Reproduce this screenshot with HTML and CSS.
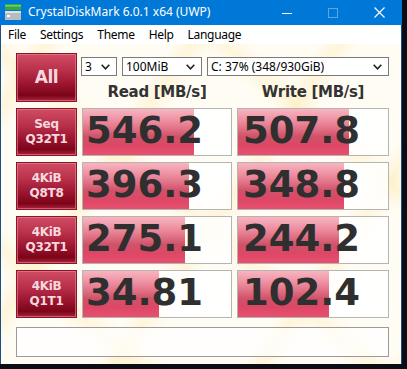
FILE: index.html
```html
<!DOCTYPE html>
<html lang="en">
<head>
  <meta charset="UTF-8" />
  <title>CrystalDiskMark 6.0.1 x64 (UWP)</title>
  <link rel="stylesheet" href="styles.css">
</head>
<body>
  <div class="window">
    <div class="titlebar">
      <svg class="app-icon" width="16" height="16" viewBox="0 0 16 16">
        <rect x="0" y="0" width="16" height="6" fill="#35a845"/>
        <rect x="0" y="1" width="16" height="1.5" fill="#6fd07a"/>
        <rect x="0" y="7" width="16" height="9" fill="#b9bcbf"/>
        <rect x="0" y="7" width="16" height="2" fill="#dfe1e3"/>
        <rect x="2" y="11" width="3" height="2" fill="#ffffff"/>
      </svg>
      <span class="title">CrystalDiskMark 6.0.1 x64 (UWP)</span>
      <div class="caption">
        <span class="cap">
          <svg width="10" height="10" viewBox="0 0 10 10"><line x1="0" y1="5.5" x2="10" y2="5.5" stroke="#fff" stroke-width="1"/></svg>
        </span>
        <span class="cap">
          <svg width="10" height="10" viewBox="0 0 10 10"><rect x="0.5" y="0.5" width="9" height="9" fill="none" stroke="#5aa7e6" stroke-width="1"/></svg>
        </span>
        <span class="cap">
          <svg width="11" height="11" viewBox="0 0 11 11"><path d="M0.5 0.5 L10.5 10.5 M10.5 0.5 L0.5 10.5" stroke="#fff" stroke-width="1.2"/></svg>
        </span>
      </div>
    </div>

    <ul class="menu">
      <li>File</li>
      <li>Settings</li>
      <li>Theme</li>
      <li>Help</li>
      <li>Language</li>
    </ul>

    <div class="content">
      <div class="board">
        <button class="test-btn all">All</button>
        <div class="head">
          <div class="selects">
            <div class="select s-count">3<svg class="chev" width="9" height="6" viewBox="0 0 9 6"><path d="M0.7 0.7 L4.5 4.8 L8.3 0.7" fill="none" stroke="#1e1e1e" stroke-width="1.5"/></svg></div>
            <div class="select s-size">100MiB<svg class="chev" width="9" height="6" viewBox="0 0 9 6"><path d="M0.7 0.7 L4.5 4.8 L8.3 0.7" fill="none" stroke="#1e1e1e" stroke-width="1.5"/></svg></div>
            <div class="select s-drive">C: 37% (348/930GiB)<svg class="chev" width="9" height="6" viewBox="0 0 9 6"><path d="M0.7 0.7 L4.5 4.8 L8.3 0.7" fill="none" stroke="#1e1e1e" stroke-width="1.5"/></svg></div>
          </div>
          <div class="labels">
            <span>Read [MB/s]</span>
            <span>Write [MB/s]</span>
          </div>
        </div>

        <button class="test-btn">Seq<br>Q32T1</button>
        <div class="cell"><div class="bar" style="width:111px"></div><span class="value">546.2</span></div>
        <div class="cell"><div class="bar" style="width:111px"></div><span class="value">507.8</span></div>

        <button class="test-btn">4KiB<br>Q8T8</button>
        <div class="cell"><div class="bar" style="width:106px"></div><span class="value">396.3</span></div>
        <div class="cell"><div class="bar" style="width:106px"></div><span class="value">348.8</span></div>

        <button class="test-btn">4KiB<br>Q32T1</button>
        <div class="cell"><div class="bar" style="width:102px"></div><span class="value">275.1</span></div>
        <div class="cell"><div class="bar" style="width:101px"></div><span class="value">244.2</span></div>

        <button class="test-btn">4KiB<br>Q1T1</button>
        <div class="cell"><div class="bar" style="width:76px"></div><span class="value">34.81</span></div>
        <div class="cell"><div class="bar" style="width:91px"></div><span class="value">102.4</span></div>
      </div>
      <div class="comment"></div>
    </div>
  </div>
</body>
</html>
```

FILE: styles.css
```css
* {
  box-sizing: border-box;
  margin: 0;
  padding: 0;
}
body {
  background: #0c0d14;
  width: 407px;
  height: 369px;
  overflow: hidden;
}
.window {
  width: 402px;
  height: 364px;
  border-left: 1px solid #1b4f86;
  border-right: 1px solid #1b4f86;
  display: flex;
  flex-direction: column;
  background:
    repeating-linear-gradient(125deg, rgba(253, 226, 150, 0) 0px, rgba(253, 226, 150, 0) 45px, rgba(253, 226, 150, 0.28) 62px, rgba(253, 226, 150, 0) 80px, rgba(253, 226, 150, 0) 120px),
    repeating-linear-gradient(40deg, rgba(252, 232, 170, 0) 0px, rgba(252, 232, 170, 0) 70px, rgba(252, 232, 170, 0.32) 88px, rgba(252, 232, 170, 0) 106px, rgba(252, 232, 170, 0) 150px),
    #fffcf4;
}

/* title bar */
.titlebar {
  height: 25px;
  background: #0078d7;
  display: flex;
  align-items: center;
  color: #fff;
  margin: 0 -1px;
}
.app-icon {
  margin-left: 5px;
  margin-right: 7px;
  margin-top: -1px;
}
.title {
  font-family: "Noto Sans", sans-serif;
  font-size: 12px;
  margin-top: -2px;
}
.caption {
  margin-left: auto;
  display: flex;
  height: 100%;
}
.cap {
  width: 46px;
  display: flex;
  align-items: center;
  justify-content: center;
}

/* menu */
.menu {
  list-style: none;
  height: 19px;
  background: #fff;
  display: flex;
  align-items: center;
  padding-left: 7px;
  font-family: "Noto Sans", sans-serif;
  font-size: 12px;
  letter-spacing: -0.3px;
  color: #000;
}
.menu li {
  margin-right: 14px;
}

/* main area */
.content {
  padding: 9px 0 0 15px;
}
.board {
  display: grid;
  grid-template-columns: 61px 150px 152px;
  grid-template-rows: 49px repeat(4, 48px);
  column-gap: 5px;
  row-gap: 6px;
}
.test-btn {
  border: 1px solid #8c1428;
  box-shadow: inset 0 0 0 1px rgba(240, 140, 160, 0.55);
  background: linear-gradient(to bottom, #cf4d64 0%, #b9304a 35%, #9a1430 65%, #7c0418 88%, #a82640 100%);
  color: #f6d9de;
  font-family: "DejaVu Sans", Verdana, sans-serif;
  font-weight: bold;
  font-size: 12px;
  line-height: 15px;
  text-align: center;
  letter-spacing: -0.3px;
}
.test-btn.all {
  font-size: 17px;
  letter-spacing: -0.5px;
}
.head {
  grid-column: 2 / 4;
  display: flex;
  flex-direction: column;
}
.selects {
  display: flex;
  gap: 5px;
  margin-top: 4px;
  margin-left: -1px;
  height: 19px;
}
.select {
  position: relative;
  background: #fff;
  border: 1px solid #7a7a7a;
  font-family: "Noto Sans", sans-serif;
  font-size: 12px;
  line-height: 17px;
  padding-left: 3px;
  color: #000;
}
.chev {
  position: absolute;
  right: 6px;
  top: 6px;
}
.s-count { width: 36px; }
.s-size { width: 80px; }
.s-drive { width: 182px; }
.labels {
  display: grid;
  grid-template-columns: 150px 152px;
  column-gap: 5px;
  margin-top: 7px;
  font-family: "DejaVu Sans", Verdana, sans-serif;
  font-weight: bold;
  font-size: 15px;
  line-height: 18px;
  color: #333;
  text-align: center;
  letter-spacing: -0.3px;
}
.cell {
  position: relative;
  border: 1px solid #b4b4b4;
  background: rgba(255, 255, 255, 0.82);
  display: flex;
  align-items: center;
  justify-content: flex-end;
  padding-right: 28px;
}
.bar {
  position: absolute;
  left: 0;
  top: 0;
  bottom: 0;
  background: linear-gradient(to bottom, #f7b5c1 0%, #ee8fa1 25%, #de6d82 45%, #cf5268 60%, #de4766 80%, #e8506f 100%);
}
.value {
  position: relative;
  font-family: "DejaVu Sans", Verdana, sans-serif;
  font-weight: bold;
  font-size: 37px;
  line-height: 40px;
  color: #2f2f2f;
  margin-top: -2px;
}
.comment {
  margin-top: 9px;
  width: 373px;
  height: 30px;
  border: 1px solid #9a9a9a;
  background: rgba(255, 255, 255, 0.7);
}
```
